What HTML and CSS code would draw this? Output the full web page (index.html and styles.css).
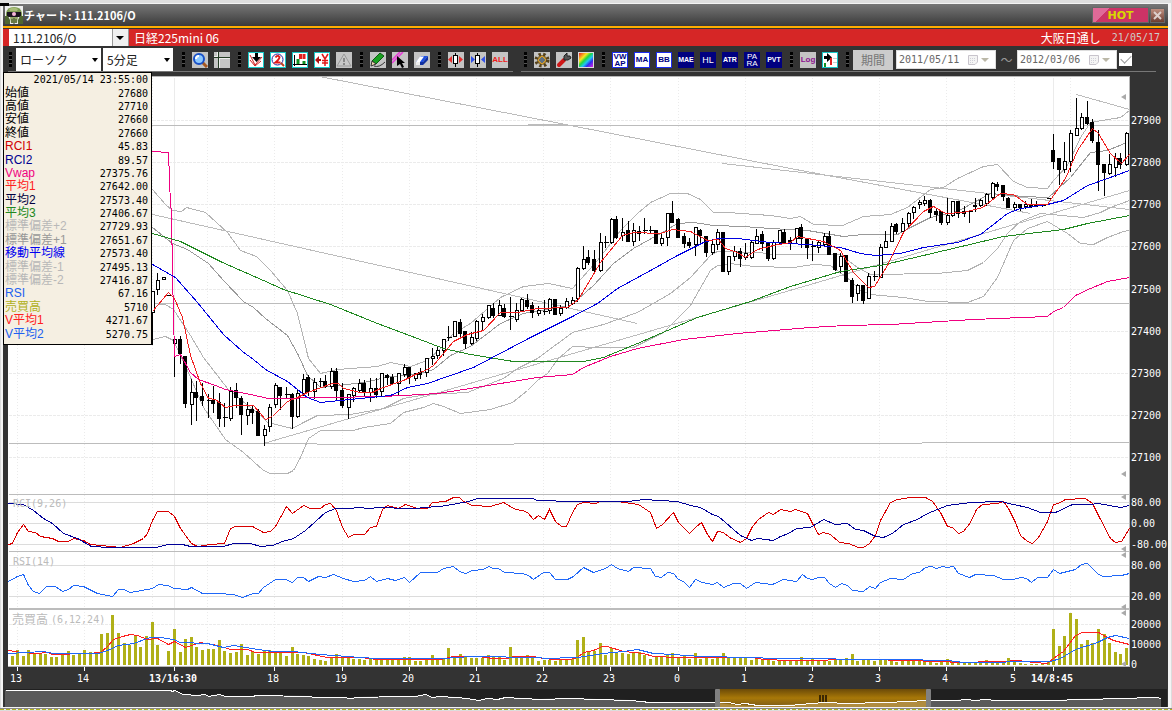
FILE: index.html
```html
<!DOCTYPE html>
<html lang="ja">
<head>
    <meta charset="utf-8">
    <title>チャート: 111.2106/O</title>
    <link rel="stylesheet" href="styles.css">
</head>
<body>
    <div class="window">
        <header class="titlebar">
            <svg class="logo" width="18" height="18" viewBox="0 0 18 18">
                <rect width="18" height="18" fill="#eee"/>
                <path d="M1 7Q2 1 9 1T17 7V11H1Z" fill="#7c9a50"/>
                <path d="M4 3Q9 0 13 3L12 5H5Z" fill="#a8bd78"/>
                <rect x="2" y="6" width="14" height="5" fill="#1c1420"/>
                <circle cx="9" cy="8" r="2" fill="#f6b8d8"/>
                <path d="M0 10H3L5 14V18H0ZM18 10H15L13 14V18H18Z" fill="#4f6630"/>
                <path d="M5 11H13L12 17H6Z" fill="#91a766"/>
                <path d="M7 13V17M9 12V18M11 13V17" stroke="#3c4a26"/>
            </svg>
            <h1>チャート: 111.2106/O</h1>
            <button class="hot">HOT</button>
            <button class="close" aria-label="閉じる">
                <svg width="9" height="9" viewBox="0 0 9 9"><path d="M1 1L8 8M8 1L1 8" stroke="#ddd0cc" stroke-width="2"/></svg>
            </button>
        </header>

        <div class="symbolbar">
            <div class="combo combo-symbol">
                <select aria-label="銘柄"><option>111.2106/O</option></select>
            </div>
            <span class="symbol">日経225mini 06</span>
            <span class="session">大阪日通し</span>
            <span class="date">21/05/17</span>
        </div>

        <div class="toolbar">
            <div class="strip strip-left">
                <i class="grip"></i>
                <div class="combo combo-type">
                    <select aria-label="チャート種類"><option>ローソク</option></select>
                </div>
                <div class="combo combo-foot">
                    <select aria-label="足種"><option>5分足</option></select>
                </div>
                <i class="grip"></i>
                <div class="tools">
                    <button aria-label="拡大"><svg viewBox="0 0 16 16"><path d="M10 10L15 15" stroke="#a85820" stroke-width="3"/><circle cx="7" cy="7" r="5" fill="#8cc8ff" stroke="#1850c8" stroke-width="2"/><path d="M4 7Q4 4 7 4" stroke="#fff" fill="none" stroke-width="2"/></svg></button>
                    <button aria-label="十字線"><svg viewBox="0 0 16 16"><path d="M0 5.500H16M4.500 0V16" stroke="#243c24"/><path d="M0 4.500H4M3.500 0V4M5 6.500H16M5.500 6V16" stroke="#eee"/></svg></button>
                </div>
                <i class="grip"></i>
                <div class="tools">
                    <button class="cyan" aria-label="矢印"><svg viewBox="0 0 14 14"><path d="M1 2L6 12L13 4M1 7L6 13L12 8" stroke="#d02020" fill="none"/><path d="M6 0H9V4H12L7.500 9L3 4H6Z" fill="#000"/></svg></button>
                    <button class="cyan" aria-label="二画面"><svg viewBox="0 0 14 14"><circle cx="6.500" cy="6.500" r="5.500" fill="#fff" stroke="#2020a0"/><path d="M4.500 4.500Q6.500 1.500 8.500 4Q8.500 6 4.500 9.500H9.500" stroke="#e01818" stroke-width="2" fill="none"/><path d="M10 10L13 13" stroke="#c04020" stroke-width="2"/></svg></button>
                    <button class="cyan" aria-label="出来高"><svg viewBox="0 0 14 14"><path d="M1.500 2V13M0 11.500H14" stroke="#000"/><path d="M5 6V11M11 8V11" stroke="#109020" stroke-width="3"/><path d="M7.500 1V6M11 1V6" stroke="#e02020" stroke-width="3"/></svg></button>
                    <button class="cyan" aria-label="価格"><svg viewBox="0 0 14 14"><path d="M0 7L4 3V6H6V8H4V11Z" fill="#b01010"/><path d="M7 1L10 6L13 1M10 6V13M7 7.500H13M7 10H13" stroke="#e01818" stroke-width="1.500" fill="none"/></svg></button>
                    <button aria-label="警告"><svg viewBox="0 0 16 16"><path d="M8 2L15 14H1Z" fill="#c8c8c8" stroke="#999"/><path d="M8 6V10M8 11V13" stroke="#888" stroke-width="2"/></svg></button>
                </div>
                <i class="grip"></i>
                <div class="tools">
                    <button aria-label="鉛筆"><svg viewBox="0 0 16 16"><path d="M2 9L10 1L14 4L6 12Z" fill="#18a020" stroke="#0b5a10"/><path d="M2 9L1 14L6 12Z" fill="#f0d8b0" stroke="#333"/><path d="M4 14Q9 16 15 10" stroke="#333" fill="none"/></svg></button>
                    <button aria-label="選択"><svg viewBox="0 0 16 16"><path d="M0 8L8 0M0 11L11 0" stroke="#e838d8" stroke-width="1.500"/><path d="M5 4V14L8 12L10 16L12 15L10 11H13Z" fill="#000"/></svg></button>
                    <button aria-label="消しゴム"><svg viewBox="0 0 16 16"><path d="M7 4H14L9 10H2Z" fill="#2050e0"/><path d="M2 10H6L10 4.500H6Z" fill="#fff"/><path d="M2 10H9V13H2ZM9 10L14 4V8L9 13Z" fill="#1030a0"/><path d="M2 10H6V13H2Z" fill="#eee"/></svg></button>
                </div>
                <i class="grip"></i>
                <div class="tools">
                    <button aria-label="広げる"><svg viewBox="0 0 16 16"><path d="M7.500 1V15" stroke="#000"/><rect x="5.500" y="3.500" width="4" height="8" fill="#fff" stroke="#000"/><path d="M4 4V11L0 7.500ZM11 4V11L15 7.500Z" fill="#e83030"/></svg></button>
                    <button aria-label="縮める"><svg viewBox="0 0 16 16"><path d="M7.500 1V15" stroke="#000"/><rect x="5.500" y="3.500" width="4" height="8" fill="#fff" stroke="#000"/><path d="M1 4V11L5 7.500ZM15 4V11L11 7.500Z" fill="#3050e8"/></svg></button>
                    <button class="all">ALL</button>
                </div>
            </div>
            <div class="strip strip-right">
                <i class="grip"></i>
                <div class="tools">
                    <button aria-label="設定"><svg viewBox="0 0 16 16"><circle cx="8" cy="8" r="5" fill="#8a7040" stroke="#54421c" stroke-width="5" stroke-dasharray="2 2"/><circle cx="8" cy="8" r="4" fill="#a88438"/><path d="M4 8L8 4L12 8L8 12Z" fill="#607080" stroke="#e0a020"/></svg></button>
                    <button aria-label="工具"><svg viewBox="0 0 16 16"><path d="M3 13L8 8" stroke="#d01818" stroke-width="4" stroke-linecap="round"/><path d="M8 8L8 4L11 1L11 4L14 4L15 6L12 8Z" fill="#555" stroke="#222"/></svg></button>
                    <button class="rainbow" aria-label="配色"></button>
                </div>
                <i class="grip"></i>
                <div class="tools">
                    <button class="ind on two">VW<br>AP</button>
                    <button class="ind on">MA</button>
                    <button class="ind on">BB</button>
                    <button class="ind three">MAE</button>
                    <button class="ind">HL</button>
                    <button class="ind three">ATR</button>
                    <button class="ind two">PA<br>RA</button>
                    <button class="ind three">PVT</button>
                </div>
                <i class="grip"></i>
                <div class="tools">
                    <button class="log">Log</button>
                    <button class="cyan" aria-label="転送"><svg viewBox="0 0 14 14"><path d="M1 3H4V0L9 4.500L4 9V6H1Z" fill="#000"/><path d="M8 5V12" stroke="#e02020" stroke-width="2" fill="none"/><path d="M2 10V14" stroke="#109020" stroke-width="2"/><path d="M10 5.500H14M10 9.500H14" stroke="#ccc"/></svg></button>
                </div>
                <i class="grip"></i>
                <button class="period">期間</button>
                <div class="datebox">
                    <input type="text" value="2011/05/11" aria-label="開始日">
                    <svg width="12" height="12" viewBox="0 0 12 12"><path d="M1.500 1.500H10.500V8L8 10.500H1.500Z" fill="#f4f4f4" stroke="#c8c4cc"/><path d="M3 4.500H9M3 6.500H9M3 8.500H7" stroke="#d0d0d8" stroke-dasharray="1 1"/></svg>
                </div>
                <span class="tilde">～</span>
                <div class="datebox">
                    <input type="text" value="2012/03/06" aria-label="終了日">
                    <svg width="12" height="12" viewBox="0 0 12 12"><path d="M1.500 1.500H10.500V8L8 10.500H1.500Z" fill="#f4f4f4" stroke="#c8c4cc"/><path d="M3 4.500H9M3 6.500H9M3 8.500H7" stroke="#d0d0d8" stroke-dasharray="1 1"/></svg>
                </div>
                <input class="check" type="checkbox" checked aria-label="期間指定">
            </div>
        </div>

        <main class="chart">
            <svg id="chart" viewBox="3 76 1165 612"></svg>
            <table class="quote">
                <tr><th colspan="2">2021/05/14 23:55:00</th></tr>
                <tr><td>始値</td><td>27680</td></tr>
                <tr><td>高値</td><td>27710</td></tr>
                <tr><td>安値</td><td>27660</td></tr>
                <tr><td>終値</td><td>27660</td></tr>
                <tr><td class="red-dark">RCI1</td><td>45.83</td></tr>
                <tr><td class="navy">RCI2</td><td>89.57</td></tr>
                <tr><td class="pink">Vwap</td><td>27375.76</td></tr>
                <tr><td class="red">平均1</td><td>27642.00</td></tr>
                <tr><td class="ink">平均2</td><td>27573.40</td></tr>
                <tr><td class="green">平均3</td><td>27406.67</td></tr>
                <tr><td class="gray">標準偏差+2</td><td>27729.93</td></tr>
                <tr><td class="gray-dark">標準偏差+1</td><td>27651.67</td></tr>
                <tr><td class="blue">移動平均線</td><td>27573.40</td></tr>
                <tr><td class="gray">標準偏差-1</td><td>27495.13</td></tr>
                <tr><td class="gray">標準偏差-2</td><td>27416.87</td></tr>
                <tr><td class="sky">RSI</td><td>67.16</td></tr>
                <tr><td class="olive">売買高</td><td>5710</td></tr>
                <tr><td class="red">V平均1</td><td>4271.67</td></tr>
                <tr><td class="sky">V平均2</td><td>5270.75</td></tr>
            </table>
        </main>

        <svg class="navigator" id="navigator" viewBox="3 688 1165 19"></svg>
    </div>
    <div class="ticker"></div>
    <script src="script.js"></script>
</body>
</html>
```
FILE: styles.css
```css
* {
    margin: 0;
    padding: 0;
    box-sizing: border-box;
}

body {
    background: #dcdcdc;
    font-family: "Noto Sans CJK JP", sans-serif;
    font-size: 12px;
    line-height: 14px;
    position: relative;
    border-top: 3px solid #dfdfdf;
}

body::before {
    content: '';
    position: absolute;
    left: 0;
    top: -3px;
    width: 9px;
    height: 6px;
    background: #000;
}

button {
    border: none;
    font-family: inherit;
}

svg {
    display: block;
}

.window {
    margin: 0 1px;
    border: solid #f4f4f4;
    border-width: 1px 3px 1px 2px;
    background: #333;
}

/* title bar */
.titlebar {
    display: flex;
    align-items: center;
    gap: 1px;
    height: 24px;
    padding: 0 3px 0 2px;
    background: linear-gradient(#777, #3a3a3a);
    border-bottom: 2px solid #ffae00;
}

.titlebar h1 {
    flex: 1;
    font-size: 11px;
    color: #fff;
}

.hot {
    width: 57px;
    height: 16px;
    border: 1px solid #666;
    background: linear-gradient(135deg, #e06a98 12px, #cc3366 12px);
    color: #d8d800;
    font: bold 11px "DejaVu Sans", sans-serif;
}

.close {
    display: flex;
    align-items: center;
    justify-content: center;
    width: 15px;
    height: 15px;
    border: 1px solid #666;
    background: linear-gradient(#c09080, #6c3c30);
}

/* symbol bar */
.symbolbar {
    display: flex;
    align-items: center;
    height: 18px;
    padding: 0 8px 0 6px;
    background: #d62626;
    border-top: 1px solid #333;
    color: #fff;
}

.symbol {
    flex: 1;
    margin-left: 5px;
}

.date {
    margin-left: 11px;
    color: #ccc;
    font: 10px "DejaVu Sans Mono", monospace;
}

.combo {
    position: relative;
    height: 23px;
    background: #fff;
}

.combo select {
    width: 100%;
    height: 100%;
    padding-left: 4px;
    border: none;
    border-radius: 0;
    appearance: none;
    background: none;
    color: #222;
    font-family: inherit;
    font-size: 12px;
}

.combo::after {
    content: '';
    position: absolute;
    right: 3px;
    top: 10px;
    border: solid transparent;
    border-width: 4px 3px 0;
    border-top-color: #000;
}

.combo-symbol {
    width: 120px;
    height: 17px;
    border-right: 1px solid #999;
}

.combo-symbol select {
    background: linear-gradient(90deg, #fff 103px, #999 103px, #999 104px, #f0f0f0 104px);
}

.combo-symbol::after {
    top: 7px;
    right: 4px;
    border-width: 4px 4px 0;
}

.combo-type {
    width: 85px;
    margin-right: 2px;
}

.combo-foot {
    width: 70px;
    margin-right: 1px;
}

/* toolbar */
.toolbar {
    display: flex;
    gap: 8px;
    height: 30px;
    padding: 2px 12px 4px 5px;
}

.strip {
    display: flex;
    align-items: center;
    border-bottom: 1px solid #777;
}

.strip-left {
    width: 505px;
}

.strip-right {
    flex: 1;
}

.grip {
    width: 3px;
    height: 15px;
    margin: 0 7px 0 8px;
    background: repeating-linear-gradient(#000 0 3px, #555 3px 4px);
}

.strip-left > .grip:first-child {
    margin: 0 4px 0 1px;
}

.strip-right > .grip:first-child {
    margin-left: 3px;
}

.tools {
    display: flex;
    gap: 6px;
}

.tools button {
    width: 16px;
    height: 16px;
    background: #c4c4c4;
    overflow: hidden;
}

.tools .cyan {
    border: 1px solid #18c8c8;
    background: #fff;
}

.tools .ind {
    background: #000080;
    color: #fff;
    font: 9px "Liberation Sans", sans-serif;
    line-height: 14px;
}

.tools .on {
    border: 1px solid #1c2cf0;
    background: #fff;
    color: #000080;
    font-weight: bold;
    font-size: 8px;
}

.tools .three {
    font-size: 7px;
    font-weight: bold;
}

.tools .two {
    font-size: 8px;
    line-height: 7px;
}

.tools .all {
    color: #f01818;
    font: bold 8px "Liberation Sans", sans-serif;
}

.tools .log {
    color: #8c1090;
    font: bold 8px "Liberation Sans", sans-serif;
}

.tools .rainbow {
    border: 1px solid #ddd;
    background: linear-gradient(135deg, #f02020, #f8e820 30%, #20d840 45%, #20c8f0 60%, #3030f0 75%, #e020e0);
}

.period {
    width: 40px;
    height: 20px;
    margin-right: 3px;
    background: #ccc;
    color: #777;
    font-size: 12px;
}

.strip-right > .grip:nth-of-type(4) {
    margin-right: 4px;
}

.datebox {
    display: flex;
    align-items: center;
    width: 100px;
    height: 19px;
    padding: 0 6px 0 2px;
    background: #fff;
    border: 1px solid #ddd;
}

.datebox input {
    flex: 1;
    min-width: 0;
    border: none;
    color: #666;
    font: 10px "DejaVu Sans Mono", monospace;
}

.datebox::after {
    content: '';
    margin-left: 2px;
    border: solid transparent;
    border-width: 4px 4px 0;
    border-top-color: #bbb8a8;
}

.tilde {
    width: 21px;
    text-align: center;
    color: #999;
}

.check {
    appearance: none;
    width: 13px;
    height: 13px;
    margin-left: 2px;
    background: #fff;
}

.check::before {
    content: '';
    display: block;
    width: 9px;
    height: 5px;
    margin: 2px;
    border: solid #999;
    border-width: 0 0 1px 1px;
    transform: rotate(-45deg);
}

/* chart */
.chart {
    position: relative;
}

#chart,
.navigator {
    width: 100%;
    height: auto;
}

#chart text {
    fill: #fff;
    font: 10px "DejaVu Sans Mono", "Noto Sans CJK JP", monospace;
}

#chart .title {
    fill: #bbb;
}

#chart .cjk {
    font-size: 12px;
}

#chart .center {
    text-anchor: middle;
}

#chart .bold {
    font-weight: bold;
}

.quote {
    position: absolute;
    left: 0;
    top: -4px;
    width: 149px;
    height: 273px;
    padding-bottom: 3px;
    border: 1px solid #000;
    border-collapse: separate;
    border-spacing: 0;
    background: #f5efe2;
    font-family: "Liberation Sans", "Noto Sans CJK JP", sans-serif;
    line-height: 13px;
}

.quote td:first-child {
    padding-left: 1px;
}

.quote th,
.quote td:last-child {
    padding-right: 3px;
    text-align: right;
    font: 10px "DejaVu Sans Mono", monospace;
    line-height: 13px;
}

.red-dark { color: #d00000; }
.red { color: #ff2020; }
.navy { color: #000090; }
.ink { color: #000040; }
.pink { color: #f00080; }
.green { color: #208820; }
.gray { color: #b8b8b8; }
.gray-dark { color: #989898; }
.blue { color: #0000f0; }
.sky { color: #2060f0; }
.olive { color: #b0b020; }

.ticker {
    height: 3px;
    border-top: 1px solid #888;
    border-bottom: 1px solid #ddd;
    background: repeating-linear-gradient(90deg, #b0b020 0 4px, #eee 4px 6px);
}
```
FILE: script.js
```javascript
const chart = document.getElementById('chart');
const nav = document.getElementById('navigator');
const NS = 'http://www.w3.org/2000/svg';

function add(parent, tag, attrs, text) {
    const el = document.createElementNS(NS, tag);
    for (const key in attrs) el.setAttribute(key, attrs[key]);
    if (text) el.textContent = text;
    parent.appendChild(el);
    return el;
}

// bars are 5 minutes apart, bar 0 is the 16:30 open
const barX = i => Math.round(174 + i * 5.6);

add(chart, 'rect', { x: 3, y: 76, width: 1165, height: 612, fill: '#333' });
add(chart, 'rect', { x: 8, y: 76, width: 1122, height: 591, fill: '#b8b8b8' });
add(chart, 'rect', { x: 8, y: 77, width: 1121, height: 589, fill: '#fff' });

const grid = add(chart, 'g', { transform: 'translate(.5 .5)', 'shape-rendering': 'crispEdges', fill: 'none' });

function line(x1, y1, x2, y2, stroke, dash) {
    add(grid, 'path', { d: `M${x1} ${y1}L${x2} ${y2}`, stroke, 'stroke-dasharray': dash || 'none' });
}

// grid
[17, 84, 152, 207, 274, 342, 409, 476, 543, 610, 678, 745, 812, 879, 946, 1014, 1070].forEach(x => line(x, 77, x, 665, '#ebebeb', '1 2'));
[174, 1053].forEach(x => line(x, 77, x, 665, '#ebebeb'));
[120, 162, 204, 246, 289, 331, 373, 415, 457, 624, 644].forEach(y => line(8, y, 1128, y, '#ebebeb', '3 1'));
[502, 523, 544, 565, 596].forEach(y => line(8, y, 1128, y, '#dcdcdc'));
[494, 551, 608, 609].forEach(y => line(8, y, 1128, y, '#bcbcbc'));

// volume
const volume = {
    '-29': [9, 15, 9, 15, 12, 12, 11, 8, 8, 10, 14, 10, 11, 15, 13, 13, 31, 32, 50, 32, 22, 20, 30, 18, 29, 43, 20, 0, 14, 36],
    1: [13, 26, 28, 18, 15, 16, 16, 25, 14, 12, 13, 21, 10, 13, 11, 14, 15, 14, 14, 9, 18, 11, 10, 9, 6, 5, 4, 8, 11, 8, 9, 6, 6, 5, 7, 6, 6, 5, 5, 5],
    41: [8, 8, 4, 4, 6, 10, 6, 6, 17, 8, 11, 9, 7, 7, 7, 10, 8, 8, 5, 18, 8, 7, 10, 7, 4, 5, 5, 4, 5, 6, 6, 25, 28, 14, 14, 22, 10, 17, 13, 12, 11, 13, 13, 10, 6, 8, 8, 10, 12, 8, 10, 6, 12, 6, 8, 6, 8, 12, 8, 8, 8, 7, 5, 6, 5, 6, 4, 4, 4, 4, 4],
    112: [8, 5, 7, 4, 4, 4, 5, 5, 7, 11, 4, 6, 5, 4, 5, 5, 5, 3, 4, 4, 4, 6, 5, 4, 2, 3, 6, 4, 3, 3, 3, 3, 3, 5, 3, 3, 3, 7, 4, 2, 1, 1, 1, 1, 4],
    157: [36, 19, 29, 52, 46, 21, 25, 22, 36, 31, 22, 13, 11, 17]
};
for (const start in volume) {
    volume[start].forEach((h, n) => {
        add(chart, 'rect', { x: barX(Number(start) + n) - 1, y: 665 - h, width: 3, height: h, fill: '#b0b018' });
    });
}

const plot = add(chart, 'g', { transform: 'translate(.5 .5)', 'shape-rendering': 'crispEdges', fill: 'none' });

function poly(points, stroke) {
    add(plot, 'polyline', { points, stroke });
}

// trend lines
poly('8,125 1129,125', '#bcbcbc');
poly('152,303 1129,303', '#bcbcbc');
poly('8,443 316,443 317,444 720,443 1129,442', '#bcbcbc');
poly('319,76 565,124 790,168 1030,213', '#bcbcbc');
poly('722,163 1129,209', '#bcbcbc');
poly('152,214 637,323', '#bcbcbc');
poly('263,443 490,377 810,284 1129,190', '#bcbcbc');
poly('1076,94 1129,109', '#bcbcbc');
poly('490,125 565,124', '#bcbcbc');

// bollinger bands
poly('152,189 165,204 172,210 181,211 186,207 205,212 227,232 240,250 256,256 270,270 287,290 297,313 308,358 320,373 337,369 377,366 390,362 410,366 427,360 440,348 453,333 470,323 500,297 523,286 548,283 572,288 597,260 620,230 637,213 650,202 670,193 687,193 700,199 713,212 727,212 770,215 790,218 800,216 813,224 842,225 863,216 890,214 907,207 930,189 943,187 957,178 983,166 997,164 1013,181 1027,187 1047,188 1053,180 1067,165 1080,137 1090,122 1120,117 1129,110', '#b4b4b4');
poly('152,227 172,243 187,249 208,263 223,280 243,301 253,307 265,318 287,335 298,355 307,375 320,387 363,382 390,376 417,374 433,369 450,355 470,346 500,323 523,313 570,305 593,285 613,263 633,248 660,233 677,223 693,222 713,225 743,226 770,228 807,230 843,236 863,234 897,234 910,227 930,217 957,211 977,200 990,193 1023,196 1048,197 1070,177 1090,152 1107,150 1129,141', '#999');
poly('152,303 165,304 173,309 190,335 203,357 227,388 240,399 260,415 267,422 292,428 303,422 317,415 350,414 383,408 403,398 427,394 467,392 490,383 503,378 517,368 537,358 572,332 603,324 637,312 670,293 690,277 710,255 717,251 760,252 770,254 840,254 857,267 870,274 937,273 967,270 983,262 997,248 1007,233 1020,221 1040,213 1083,217 1100,212 1110,207 1129,200', '#b4b4b4');
poly('152,339 165,336 173,340 187,370 203,407 225,439 243,452 263,470 270,473 287,473 293,470 300,457 308,438 320,430 353,430 363,427 390,423 403,412 423,407 433,403 443,406 460,413 490,409 512,402 527,390 537,380 547,373 558,358 572,346 597,347 633,347 663,332 673,322 690,305 710,270 717,265 730,263 753,266 793,267 813,264 830,265 850,280 860,290 870,294 903,297 927,301 967,302 983,296 997,277 1013,240 1027,228 1047,221 1057,227 1067,233 1080,243 1093,244 1107,237 1123,231 1129,230', '#b4b4b4');

// candles: high, body top, body bottom, low, falling
const candles = [
    [291, 291, 312, 344, 0], [272, 280, 289, 294, 0], [277, 277, 279, 279, 0], [295, 295, 295, 295, 1],
    [335, 339, 343, 376, 0], [335, 339, 353, 363, 1], [356, 356, 403, 407, 1], [378, 392, 404, 424, 0],
    [380, 392, 397, 420, 1], [382, 396, 400, 405, 1], [393, 400, 400, 417, 1], [385, 400, 403, 412, 1],
    [392, 402, 418, 426, 1], [402, 417, 417, 426, 1], [386, 391, 418, 420, 0], [382, 390, 397, 407, 1],
    [395, 398, 414, 434, 1], [401, 409, 415, 424, 0], [405, 409, 412, 423, 1], [408, 411, 435, 435, 1],
    [424, 429, 435, 445, 0], [403, 407, 426, 431, 0], [382, 385, 404, 407, 0], [386, 387, 395, 409, 1],
    [386, 394, 394, 398, 1], [392, 394, 416, 428, 1], [388, 393, 416, 417, 0], [373, 379, 393, 395, 0],
    [374, 377, 391, 395, 1], [377, 382, 391, 398, 0], [377, 381, 381, 386, 1], [374, 381, 386, 387, 1],
    [367, 371, 386, 388, 0], [367, 371, 390, 399, 1], [382, 390, 405, 407, 1], [394, 394, 407, 418, 0],
    [386, 388, 395, 401, 0], [378, 383, 390, 391, 0], [379, 383, 391, 395, 1], [377, 388, 392, 401, 0],
    [377, 388, 394, 397, 1], [372, 373, 391, 395, 0], [373, 375, 377, 384, 1], [373, 377, 383, 384, 1],
    [373, 373, 383, 395, 0], [363, 367, 374, 376, 0], [366, 367, 377, 383, 1], [373, 373, 378, 380, 0],
    [367, 372, 374, 378, 1], [358, 358, 372, 376, 0], [347, 356, 358, 364, 0], [346, 350, 355, 358, 0],
    [339, 339, 350, 355, 0], [325, 337, 337, 340, 1], [320, 321, 336, 336, 0], [318, 322, 333, 337, 1],
    [331, 331, 343, 348, 1], [331, 337, 343, 344, 0], [319, 321, 338, 340, 0], [313, 317, 321, 329, 0],
    [304, 305, 317, 318, 0], [302, 308, 315, 317, 1], [299, 305, 315, 315, 0], [303, 308, 316, 317, 1],
    [296, 316, 316, 329, 1], [302, 310, 319, 321, 0], [297, 299, 310, 310, 0], [293, 300, 306, 308, 1],
    [301, 305, 312, 317, 1], [305, 310, 313, 315, 0], [299, 311, 311, 314, 1], [297, 299, 310, 313, 0],
    [299, 299, 314, 314, 1], [304, 308, 313, 315, 0], [297, 301, 307, 308, 0], [296, 300, 303, 304, 0],
    [266, 268, 298, 301, 0], [245, 259, 268, 269, 0], [249, 257, 262, 264, 1], [249, 259, 270, 271, 1],
    [232, 242, 270, 271, 0], [235, 242, 242, 247, 1], [217, 219, 242, 243, 0], [215, 219, 237, 238, 1],
    [217, 232, 235, 240, 0], [220, 230, 241, 241, 1], [222, 230, 241, 245, 0], [225, 231, 233, 240, 1],
    [217, 230, 230, 233, 1], [225, 230, 230, 233, 1], [229, 230, 243, 243, 1], [232, 238, 243, 245, 0],
    [213, 213, 237, 245, 0], [200, 213, 222, 222, 1], [217, 219, 237, 237, 1], [232, 236, 243, 247, 1],
    [237, 242, 245, 247, 1], [226, 227, 244, 255, 0], [228, 230, 235, 242, 1], [235, 236, 252, 256, 1],
    [238, 244, 252, 254, 0], [228, 232, 244, 249, 0], [232, 232, 271, 271, 1], [255, 256, 271, 274, 0],
    [245, 251, 256, 260, 0], [247, 251, 258, 266, 1], [242, 253, 257, 259, 0], [240, 242, 257, 258, 0],
    [228, 236, 243, 243, 0], [230, 234, 243, 250, 1], [242, 243, 258, 260, 1], [239, 242, 258, 259, 0],
    [230, 230, 242, 243, 0], [228, 232, 242, 243, 1], [236, 240, 242, 249, 1], [227, 228, 238, 242, 0],
    [223, 227, 238, 247, 1], [238, 238, 247, 258, 1], [240, 246, 246, 260, 1], [240, 242, 247, 252, 0],
    [232, 236, 244, 246, 0], [230, 236, 254, 254, 1], [252, 253, 269, 270, 1], [252, 256, 266, 272, 0],
    [254, 255, 281, 281, 1], [277, 280, 296, 302, 1], [283, 285, 293, 300, 0], [285, 285, 300, 303, 1],
    [272, 276, 298, 298, 0], [270, 276, 276, 280, 1], [243, 247, 277, 277, 0], [230, 241, 247, 247, 0],
    [222, 226, 241, 241, 0], [222, 224, 231, 233, 1], [217, 223, 231, 231, 0], [211, 213, 223, 227, 0],
    [205, 207, 212, 218, 0], [199, 202, 204, 208, 0], [195, 200, 203, 205, 0], [198, 200, 212, 217, 1],
    [208, 211, 214, 220, 1], [211, 211, 222, 224, 1], [197, 215, 222, 224, 0], [200, 201, 215, 216, 0],
    [201, 201, 213, 217, 1], [205, 211, 213, 216, 1], [209, 211, 211, 222, 1], [197, 205, 206, 211, 1],
    [198, 200, 205, 206, 0], [192, 194, 203, 205, 0], [181, 183, 197, 198, 0], [181, 184, 186, 190, 1],
    [185, 185, 196, 200, 1], [196, 198, 207, 207, 1], [201, 204, 207, 210, 0], [204, 204, 207, 210, 1],
    [200, 204, 206, 208, 0], [198, 204, 206, 207, 1], [200, 204, 206, 206, 1], [204, 205, 205, 206, 1],
    [198, 198, 198, 198, 1], [133, 150, 161, 168, 1], [158, 158, 169, 184, 1], [141, 161, 169, 172, 0],
    [129, 133, 161, 171, 0], [97, 128, 135, 135, 0], [112, 117, 128, 129, 0], [100, 117, 123, 124, 1],
    [118, 122, 140, 142, 1], [129, 142, 164, 190, 1], [164, 164, 172, 195, 1], [153, 164, 173, 174, 0],
    [152, 158, 167, 176, 0], [152, 158, 164, 168, 1], [131, 133, 164, 165, 0]
];
candles.forEach(([high, open, close, low, falling], n) => {
    const x = barX(n - 4);
    add(plot, 'path', { d: `M${x} ${high}V${low}`, stroke: '#000' });
    if (open === close) {
        add(plot, 'path', { d: `M${x - 2} ${open}H${x + 3}`, stroke: '#000' });
    } else {
        add(plot, 'rect', { x: falling ? x - 2 : x - 1, y: open, width: 3, height: close - open, fill: falling ? '#000' : '#fff', stroke: '#000' });
    }
});

// vwap and moving averages
poly('152,151 168,152 170,205 171,210 172,275 173,313 174,356 180,354 190,372 198,379 215,385 225,389 250,394 268,398 330,397 380,396 403,395 437,393 450,391 470,388 500,383 537,377 572,374 583,367 610,356 637,348 683,339 737,333 810,327 845,325 890,324 973,319 1047,316 1053,311 1063,307 1075,295 1090,288 1107,281 1129,277', '#f00080');
poly('152,233 180,241 222,262 263,280 283,289 330,304 377,323 417,338 443,348 470,354 513,361 583,361 603,357 637,343 697,317 750,301 790,286 840,271 880,265 923,255 1003,236 1063,229 1087,223 1129,215', '#208820');
poly('152,264 175,277 197,302 223,334 242,351 253,359 265,369 287,381 307,397 320,402 350,399 390,395 407,387 427,383 450,375 473,367 490,358 530,337 572,316 597,303 617,288 650,270 677,255 703,242 717,238 737,238 770,242 807,244 840,247 860,253 875,255 900,253 923,247 957,242 980,234 993,224 1007,213 1020,208 1047,204 1063,200 1087,185 1107,178 1129,170', '#0000e0');
poly('152,311 168,292 174,298 182,317 190,355 200,383 208,398 215,399 225,407 235,405 253,405 265,419 272,416 287,401 297,397 307,392 332,383 338,383 343,388 360,392 372,392 380,388 403,380 417,373 427,369 433,365 453,341 467,334 483,330 500,312 517,312 537,308 567,307 578,299 600,262 622,235 633,232 660,233 672,229 690,231 707,240 718,239 725,248 737,252 745,257 757,249 773,245 790,242 797,236 823,241 840,250 853,272 868,287 874,286 887,265 903,232 923,211 933,206 945,213 963,212 982,207 1000,193 1013,194 1027,204 1047,204 1053,195 1065,178 1077,150 1092,128 1098,133 1110,153 1121,163 1129,154', '#f02020');

// RCI
poly('8,544 12,543 17,532 23,524 28,531 35,532 40,536 52,538 58,541 68,541 73,538 83,540 90,544 110,546 120,547 133,543 143,538 147,533 152,520 157,511 168,511 174,516 180,528 191,543 197,546 210,544 224,543 230,528 235,526 252,526 263,532 270,531 275,526 286,506 292,513 303,505 310,508 320,508 325,504 330,503 336,510 342,527 348,537 353,534 364,534 370,527 376,526 382,509 387,505 398,508 405,504 417,508 427,508 432,502 445,501 453,497 459,497 463,501 472,505 490,506 503,502 515,509 522,510 527,512 533,519 538,515 544,519 549,509 555,521 561,526 566,526 572,512 577,504 583,502 595,503 600,501 617,501 638,504 650,512 656,528 662,524 673,512 678,522 689,533 695,527 701,522 707,534 712,541 717,531 723,532 729,537 740,542 746,538 752,526 758,519 768,512 773,514 780,509 790,511 795,509 807,513 812,523 818,534 823,532 830,534 839,542 848,543 858,547 863,547 869,543 875,535 880,520 890,502 897,499 910,497 925,497 932,501 940,512 947,526 952,527 958,533 963,531 970,522 976,509 982,504 997,503 1003,501 1008,508 1015,522 1020,535 1027,541 1032,543 1038,537 1047,521 1053,504 1058,503 1065,499 1085,498 1092,503 1098,515 1110,538 1115,542 1121,541 1129,528', '#d80000');
poly('8,503 23,504 33,510 43,518 52,523 63,533 77,538 91,546 110,547 155,547 168,544 182,544 190,546 223,546 233,543 250,543 260,546 272,545 282,541 293,538 305,530 325,512 335,508 350,508 358,507 368,508 380,507 390,507 397,508 417,508 422,507 440,506 457,503 468,501 477,498 532,498 537,500 550,500 560,501 628,501 643,499 677,501 690,505 700,507 712,514 718,516 740,535 751,540 757,538 773,540 780,536 788,533 796,528 810,527 823,519 835,524 847,523 855,529 863,530 875,536 883,537 892,533 903,524 917,519 927,513 947,505 970,502 1000,501 1013,504 1027,507 1040,512 1055,512 1072,504 1090,504 1098,503 1120,507 1129,505', '#000098');

// RSI
poly('8,581 17,576 23,574 28,585 33,591 39,593 46,586 55,586 62,591 68,589 73,585 83,586 97,593 112,596 118,589 123,589 130,592 152,588 158,584 167,585 174,588 187,589 191,587 202,593 218,593 233,594 242,597 253,593 258,593 263,587 275,579 285,579 292,582 297,577 303,577 308,581 318,576 325,577 333,574 343,578 353,581 364,580 370,576 376,581 387,578 395,580 404,577 409,582 420,572 437,572 443,568 453,566 459,571 465,573 472,570 483,569 488,566 493,568 498,568 504,572 522,573 528,575 533,579 543,572 549,572 555,579 567,579 573,576 583,567 593,572 605,568 611,564 617,568 628,571 633,567 650,568 655,576 661,577 667,572 673,573 678,579 683,581 689,587 695,579 702,582 712,584 717,582 723,587 733,583 740,583 746,588 755,582 772,584 783,579 796,581 802,574 807,578 812,579 818,577 824,577 829,583 835,587 841,583 847,585 852,590 863,591 869,586 875,588 880,582 890,578 903,579 912,573 919,572 925,567 931,566 936,568 942,566 947,567 953,566 958,573 969,577 975,574 993,575 1003,579 1013,579 1020,577 1026,578 1031,582 1037,577 1047,577 1053,569 1059,573 1075,569 1081,564 1087,563 1092,568 1098,574 1103,576 1121,575 1129,573', '#2068f8');

// volume averages
poly('8,650 20,652 37,653 47,652 52,654 87,653 100,652 107,646 113,639 122,636 130,634 137,635 147,639 157,638 168,644 174,641 185,647 200,642 217,645 230,649 247,649 255,652 303,652 327,657 350,657 360,657 377,659 440,659 453,656 477,656 493,658 507,658 513,656 533,656 543,658 553,659 570,659 577,657 583,652 593,650 602,646 607,646 623,651 643,653 653,656 677,657 752,657 763,659 790,660 803,660 853,659 877,659 897,660 947,661 953,662 1003,661 1017,660 1033,662 1047,663 1053,658 1063,651 1075,635 1082,632 1098,632 1105,636 1113,640 1129,644', '#ff2020');
poly('8,653 43,651 53,653 98,653 107,650 118,645 133,643 150,637 160,637 173,639 180,642 207,643 223,647 233,645 257,649 273,651 293,651 320,654 360,657 377,658 443,658 470,656 540,657 543,658 577,657 590,655 603,653 623,651 637,649 653,653 673,654 700,656 752,657 773,658 897,659 947,660 963,662 1050,661 1060,658 1075,649 1097,642 1107,637 1115,635 1129,638', '#2068f8');

// pane handles
[97, 474, 497, 549, 555, 607, 613, 664].forEach(y => {
    add(chart, 'path', { d: `M1121 ${y}L1126 ${y - 3}V${y + 3}Z`, fill: '#aaa' });
});

// pane titles
add(chart, 'text', { x: 13, y: 507, class: 'title' }, 'RCI(9,26)');
add(chart, 'text', { x: 13, y: 565, class: 'title' }, 'RSI(14)');
add(chart, 'text', { x: 12, y: 624, class: 'title cjk' }, '売買高');
add(chart, 'text', { x: 51, y: 623, class: 'title' }, '(6,12,24)');

// price axis
[120, 162, 204, 246, 289, 331, 373, 415, 457].forEach((y, n) => {
    add(chart, 'text', { x: 1131, y: y + 4 }, String(27900 - n * 100));
});
[[502, '80.00'], [523, '0.00'], [544, '-80.00'], [565, '80.00'], [596, '20.00'], [624, '20000'], [644, '10000'], [664, '0']].forEach(([y, label]) => {
    add(chart, 'text', { x: 1131, y: y + 4 }, label);
});

// time axis
[[17, '13'], [84, '14'], [174, '13/16:30'], [274, '18'], [342, '19'], [409, '20'], [476, '21'], [543, '22'], [610, '23'], [678, '0'], [745, '1'], [812, '2'], [879, '3'], [946, '4'], [1014, '5'], [1053, '14/8:45']].forEach(([x, label]) => {
    add(chart, 'rect', { x, y: 667, width: 1, height: 4, fill: '#fff' });
    add(chart, 'text', { x: x - 1, y: 682, class: label.length > 2 ? 'center bold' : 'center' }, label);
});

// navigator
const overview = '5,690 170,690 172,691 174,690 183,694 197,695 205,694 208,696 219,694 225,696 253,696 255,695 310,696 313,697 342,697 350,698 357,697 400,696 415,696 420,695 425,694 432,697 440,696 455,697 467,698 478,700 487,698 497,699 505,697 540,699 570,698 597,699 630,700 650,702 670,702 690,702 717,702 729,702 736,704 745,703 757,705 790,705 800,704 823,702 850,703 880,702 913,701 920,700 957,700 965,699 975,700 985,699 995,700 1027,700 1060,700 1073,699 1133,698 1140,697 1155,697 1161,698';
const grad = add(add(nav, 'defs', {}), 'linearGradient', { id: 'gold', x2: 0, y2: 1 });
[[0, '#6b4a08'], [0.5, '#a87808'], [1, '#7a5a1c']].forEach(([offset, color]) => add(grad, 'stop', { offset, 'stop-color': color }));
add(nav, 'rect', { x: 3, y: 688, width: 1165, height: 19, fill: '#333' });
add(nav, 'rect', { x: 5, y: 689, width: 1162, height: 18, fill: '#202020' });
add(nav, 'polygon', { points: `${overview} 1161,707 5,707`, fill: '#5a5a5a' });
add(nav, 'rect', { x: 718, y: 689, width: 210, height: 18, fill: 'url(#gold)' });
add(nav, 'polygon', { points: '718,703 736,705 757,706 823,703 880,703 926,701 926,707 718,707', fill: '#b08c40' });
const trace = add(nav, 'g', { transform: 'translate(.5 .5)', 'shape-rendering': 'crispEdges' });
add(trace, 'polyline', { points: overview, fill: 'none', stroke: '#fff' });
add(nav, 'rect', { x: 715, y: 689, width: 5, height: 18, rx: 1, fill: '#808080' });
add(nav, 'rect', { x: 926, y: 689, width: 5, height: 18, rx: 1, fill: '#808080' });
[819, 822, 825].forEach(x => add(nav, 'rect', { x, y: 695, width: 2, height: 7, fill: '#3c2804' }));
```
